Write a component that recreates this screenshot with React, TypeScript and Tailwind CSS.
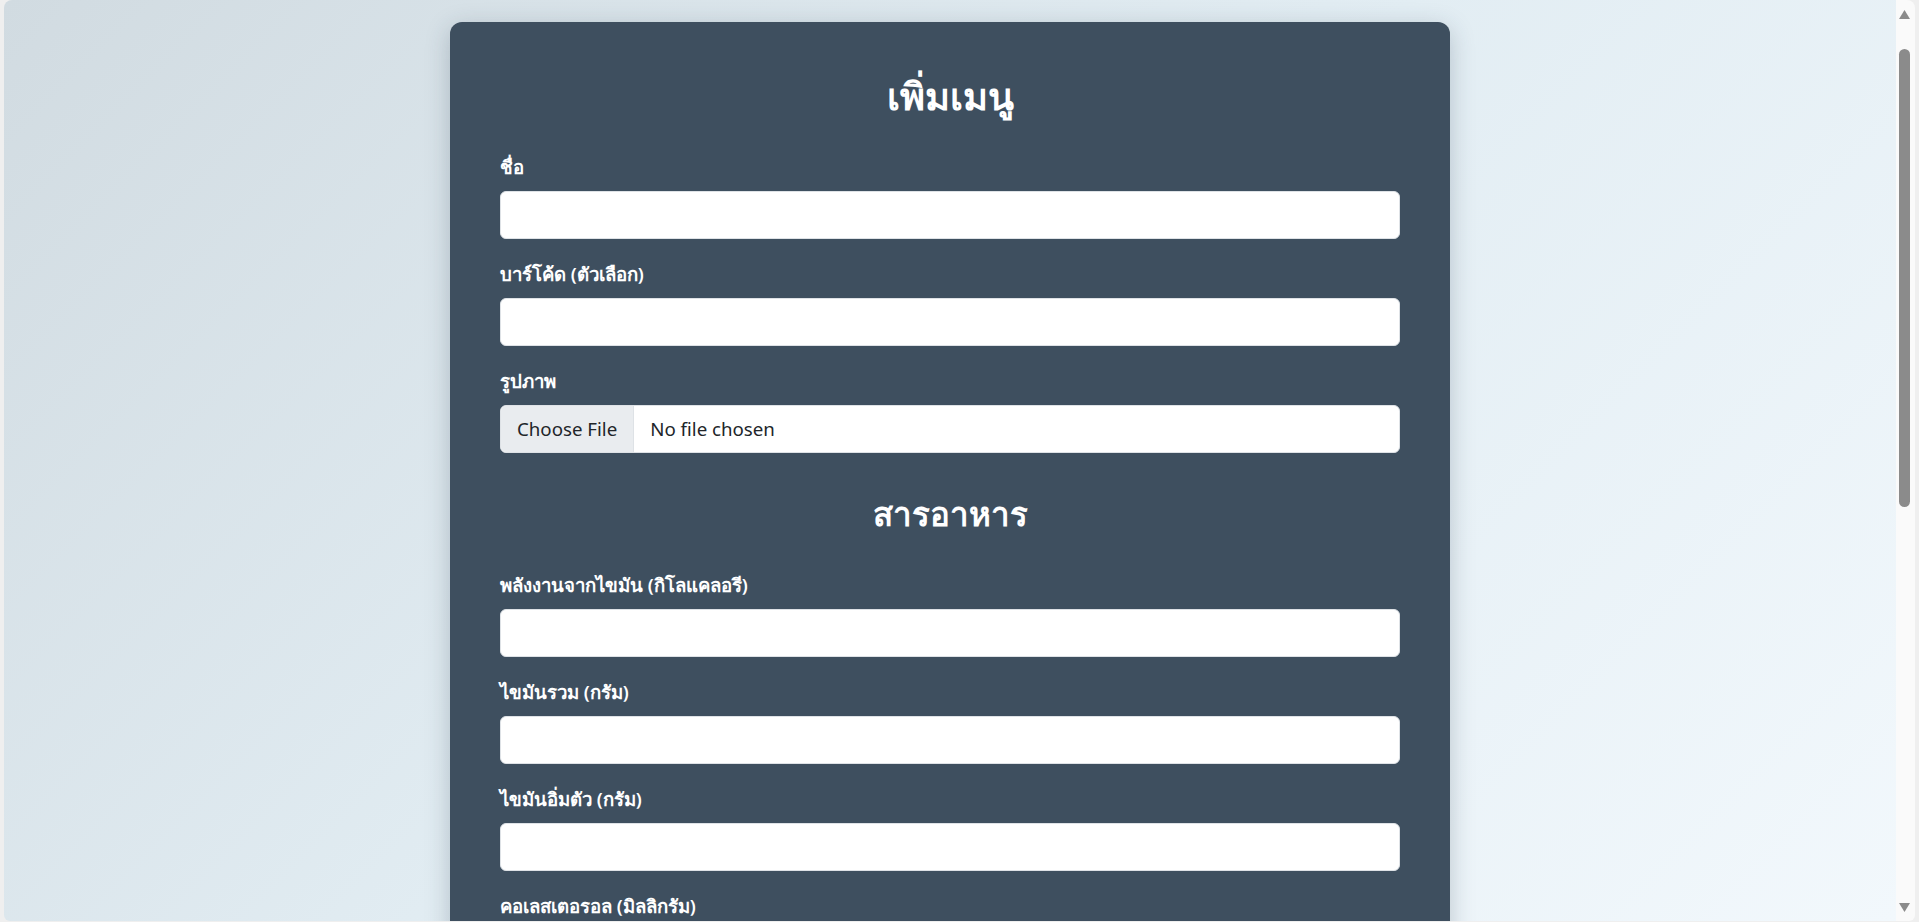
import React from 'react'

const fields = [
  { label: 'ชื่อ', type: 'text' },
  { label: 'บาร์โค้ด (ตัวเลือก)', type: 'text' },
  { label: 'รูปภาพ', type: 'file' },
]

const nutrition = [
  'พลังงานจากไขมัน (กิโลแคลอรี)',
  'ไขมันรวม (กรัม)',
  'ไขมันอิ่มตัว (กรัม)',
  'คอเลสเตอรอล (มิลลิกรัม)',
  'โซเดียม (มิลลิกรัม)',
]

const Label = ({ children }: { children: React.ReactNode }) => (
  <label className="block text-[18.6px] font-semibold leading-[28px] mb-[10px] text-white">{children}</label>
)

const TextInput = () => (
  <input
    type="text"
    className="block w-full h-[48px] bg-white border border-[#dee2e6] rounded-md px-4 text-[20px] text-[#212529] outline-none"
  />
)

const FileInput = () => (
  <div className="flex w-full h-[48px] bg-white border border-[#dee2e6] rounded-md overflow-hidden text-[18.7px] text-[#212529] font-['Noto_Sans',sans-serif]">
    <span className="flex items-center px-4 bg-[#e9ecef] border-r border-[#dee2e6]">Choose File</span>
    <span className="flex items-center pl-4">No file chosen</span>
  </div>
)

const ScrollBar = () => (
  <div className="w-[19px] shrink-0 bg-[#fafafa] flex flex-col items-center pr-[2px]">
    <svg width="11" height="9" viewBox="0 0 11 9" className="mt-[10px]">
      <polygon points="5.5,0 11,9 0,9" fill="#8b8b8b" />
    </svg>
    <div className="w-[11px] h-[458px] mt-[30px] rounded-full bg-[#8b8b8b]" />
    <div className="flex-1" />
    <svg width="11" height="9" viewBox="0 0 11 9" className="mb-[9px]">
      <polygon points="0,0 11,0 5.5,9" fill="#8b8b8b" />
    </svg>
  </div>
)

export default function App() {
  return (
    <div className="h-screen w-full overflow-hidden bg-[#efefef] px-[4px] pb-[1px] font-['Noto_Sans',sans-serif]">
      <div className="flex h-full rounded-t-lg rounded-b-md overflow-hidden">
        <main className="flex-1 overflow-hidden bg-[linear-gradient(135deg,#d1dbe1_0%,#e2edf3_50%,#f2f8fc_100%)]">
          <div className="w-[1000px] mx-auto mt-[22px] bg-[#3e4f5f] rounded-xl shadow-[0_6px_24px_rgba(40,60,80,0.25)] px-[50px] pt-[49px] pb-[40px]">
            <h1 className="text-center text-white text-[38px] font-bold leading-[48px] mb-[34px]">เพิ่มเมนู</h1>
            {fields.map((f) => (
              <div key={f.label} className="mb-[21px]">
                <Label>{f.label}</Label>
                {f.type === 'file' ? <FileInput /> : <TextInput />}
              </div>
            ))}
            <h2 className="text-center text-white text-[33px] font-bold leading-[48px] mt-[37px] mb-[33px]">สารอาหาร</h2>
            {nutrition.map((n) => (
              <div key={n} className="mb-[21px]">
                <Label>{n}</Label>
                <TextInput />
              </div>
            ))}
          </div>
        </main>
        <ScrollBar />
      </div>
    </div>
  )
}
